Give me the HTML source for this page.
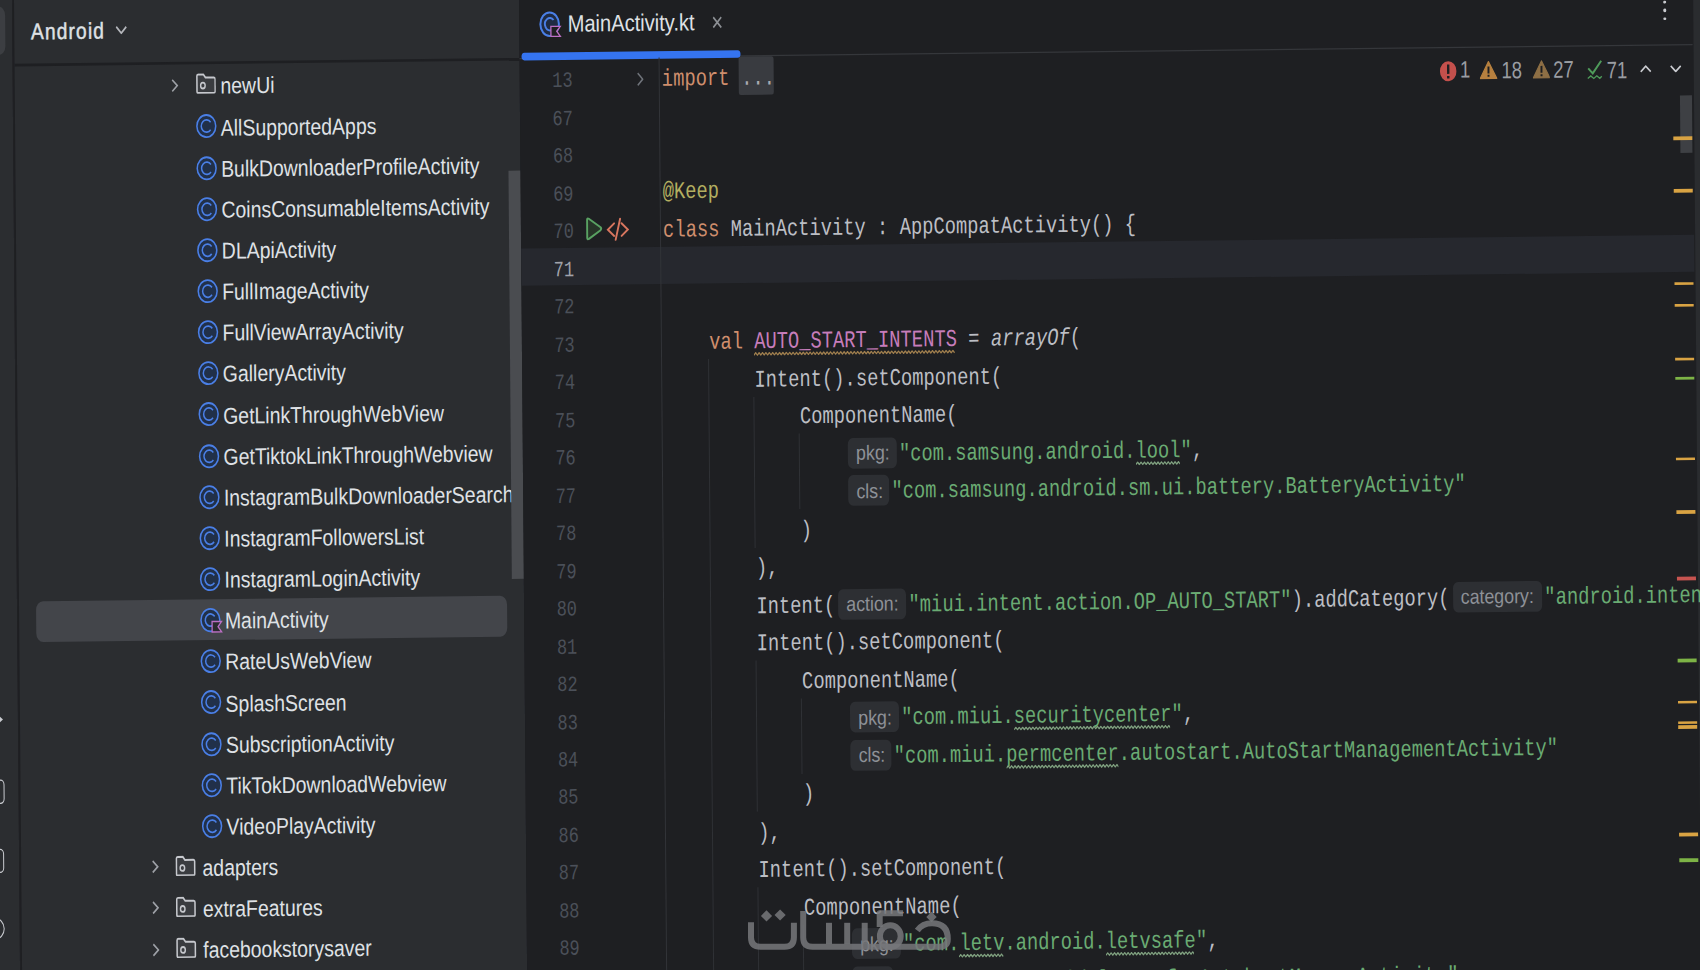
<!DOCTYPE html>
<html><head><meta charset="utf-8"><title>MainActivity.kt</title>
<style>
html,body{margin:0;padding:0;width:1700px;height:970px;overflow:hidden;background:#1E1F22}
#w{position:absolute;left:0;top:0;width:1760px;height:820px;transform-origin:0 0;transform:matrix(1,-0.0118,0.010624,1.28,0,0)}
.a{position:absolute;white-space:pre;line-height:1;margin:0}
.s{font-family:"Liberation Sans",sans-serif}
.m{font-family:"Liberation Mono",monospace}
</style></head><body><div id="w">
<div class="a" style="left:-60.00px;top:-40.00px;width:72.30px;height:900.00px;background:#2B2D30;"></div>
<div class="a" style="left:12.40px;top:-40.00px;width:1.00px;height:900.00px;background:#202124;"></div>
<div class="a" style="left:-30.00px;top:5.10px;width:34.50px;height:38.10px;background:#3C3E42;border-radius:7px;"></div>
<svg class="a" style="left:-11.98px;top:557.44px;" width="10.00" height="10.00" viewBox="0 0 10 10" preserveAspectRatio="none"><path d="M2 1 L7.5 5 L2 9" stroke="#C9CBD0" stroke-width="1.8" fill="none"/></svg>
<div class="a" style="left:-20.58px;top:609.47px;width:18.50px;height:19px;border:1.8px solid #C9CBD0;border-radius:4px;box-sizing:border-box"></div>
<div class="a" style="left:-21.15px;top:663.37px;width:18.50px;height:19px;border:1.8px solid #C9CBD0;border-radius:4px;box-sizing:border-box"></div>
<div class="a" style="left:-21.72px;top:717.49px;width:19.00px;height:17px;border:1.8px solid #C9CBD0;border-radius:50%;box-sizing:border-box"></div>
<div class="a" style="left:13.50px;top:-40.00px;width:505.70px;height:900.00px;background:#2B2D30;"></div>
<div class="a" style="left:13.50px;top:50.30px;width:505.70px;height:1.90px;background:#1E1F22;"></div>
<div class="a s" style="left:30.67px;top:15.24px;font-size:19.2px;color:#DFE1E5;letter-spacing:1.15px;-webkit-text-stroke:0.4px #DFE1E5;transform:scaleY(0.92);transform-origin:0 16.25px;">Android</div>
<svg class="a" style="left:115.00px;top:21.17px;" width="12.00" height="7.00" viewBox="0 0 12 7" preserveAspectRatio="none"><path d="M1 1 L6 6 L11 1" stroke="#B4B6BB" stroke-width="1.6" fill="none"/></svg>
<svg class="a" style="left:170.35px;top:62.51px;" width="8.00" height="11.00" viewBox="0 0 8 11" preserveAspectRatio="none"><path d="M1.5 1 L6.5 5.5 L1.5 10" stroke="#9DA0A6" stroke-width="1.5" fill="none"/></svg>
<svg class="a" style="left:194.85px;top:58.71px;" width="20.50" height="16.60" viewBox="0 0 20 16" preserveAspectRatio="none"><path d="M1.2 2.2 Q1.2 1 2.4 1 L7.5 1 L9.5 3.3 L17.8 3.3 Q19 3.3 19 4.5 L19 13.8 Q19 15 17.8 15 L2.4 15 Q1.2 15 1.2 13.8 Z" fill="#3A3C40" stroke="#C6C8CD" stroke-width="1.5"/><ellipse cx="7" cy="9.4" rx="2.2" ry="2.2" fill="none" stroke="#C6C8CD" stroke-width="1.4"/></svg>
<div class="a s" style="left:219.68px;top:59.35px;font-size:19.45px;color:#DFE1E5;transform:scaleY(0.92);transform-origin:0 16.46px;">newUi</div>
<svg class="a" style="left:194.85px;top:91.36px;overflow:visible;" width="20.50" height="18.75" viewBox="0 0 20 20" preserveAspectRatio="none"><ellipse cx="10" cy="10" rx="9.2" ry="9.2" fill="#213049" stroke="#4A7FE6" stroke-width="1.5"/><path d="M14.2 6.9 A5.1 5.1 0 1 0 14.2 13.1" fill="none" stroke="#4A7FE6" stroke-width="1.45"/></svg>
<div class="a s" style="left:219.68px;top:91.50px;font-size:19.45px;color:#DFE1E5;transform:scaleY(0.92);transform-origin:0 16.46px;">AllSupportedApps</div>
<svg class="a" style="left:194.85px;top:123.51px;overflow:visible;" width="20.50" height="18.75" viewBox="0 0 20 20" preserveAspectRatio="none"><ellipse cx="10" cy="10" rx="9.2" ry="9.2" fill="#213049" stroke="#4A7FE6" stroke-width="1.5"/><path d="M14.2 6.9 A5.1 5.1 0 1 0 14.2 13.1" fill="none" stroke="#4A7FE6" stroke-width="1.45"/></svg>
<div class="a s" style="left:219.68px;top:123.65px;font-size:19.45px;color:#DFE1E5;transform:scaleY(0.92);transform-origin:0 16.46px;">BulkDownloaderProfileActivity</div>
<svg class="a" style="left:194.85px;top:155.66px;overflow:visible;" width="20.50" height="18.75" viewBox="0 0 20 20" preserveAspectRatio="none"><ellipse cx="10" cy="10" rx="9.2" ry="9.2" fill="#213049" stroke="#4A7FE6" stroke-width="1.5"/><path d="M14.2 6.9 A5.1 5.1 0 1 0 14.2 13.1" fill="none" stroke="#4A7FE6" stroke-width="1.45"/></svg>
<div class="a s" style="left:219.68px;top:155.79px;font-size:19.45px;color:#DFE1E5;transform:scaleY(0.92);transform-origin:0 16.46px;">CoinsConsumableItemsActivity</div>
<svg class="a" style="left:194.85px;top:187.81px;overflow:visible;" width="20.50" height="18.75" viewBox="0 0 20 20" preserveAspectRatio="none"><ellipse cx="10" cy="10" rx="9.2" ry="9.2" fill="#213049" stroke="#4A7FE6" stroke-width="1.5"/><path d="M14.2 6.9 A5.1 5.1 0 1 0 14.2 13.1" fill="none" stroke="#4A7FE6" stroke-width="1.45"/></svg>
<div class="a s" style="left:219.68px;top:187.94px;font-size:19.45px;color:#DFE1E5;transform:scaleY(0.92);transform-origin:0 16.46px;">DLApiActivity</div>
<svg class="a" style="left:194.85px;top:219.96px;overflow:visible;" width="20.50" height="18.75" viewBox="0 0 20 20" preserveAspectRatio="none"><ellipse cx="10" cy="10" rx="9.2" ry="9.2" fill="#213049" stroke="#4A7FE6" stroke-width="1.5"/><path d="M14.2 6.9 A5.1 5.1 0 1 0 14.2 13.1" fill="none" stroke="#4A7FE6" stroke-width="1.45"/></svg>
<div class="a s" style="left:219.68px;top:220.09px;font-size:19.45px;color:#DFE1E5;transform:scaleY(0.92);transform-origin:0 16.46px;">FullImageActivity</div>
<svg class="a" style="left:194.85px;top:252.10px;overflow:visible;" width="20.50" height="18.75" viewBox="0 0 20 20" preserveAspectRatio="none"><ellipse cx="10" cy="10" rx="9.2" ry="9.2" fill="#213049" stroke="#4A7FE6" stroke-width="1.5"/><path d="M14.2 6.9 A5.1 5.1 0 1 0 14.2 13.1" fill="none" stroke="#4A7FE6" stroke-width="1.45"/></svg>
<div class="a s" style="left:219.68px;top:252.24px;font-size:19.45px;color:#DFE1E5;transform:scaleY(0.92);transform-origin:0 16.46px;">FullViewArrayActivity</div>
<svg class="a" style="left:194.85px;top:284.25px;overflow:visible;" width="20.50" height="18.75" viewBox="0 0 20 20" preserveAspectRatio="none"><ellipse cx="10" cy="10" rx="9.2" ry="9.2" fill="#213049" stroke="#4A7FE6" stroke-width="1.5"/><path d="M14.2 6.9 A5.1 5.1 0 1 0 14.2 13.1" fill="none" stroke="#4A7FE6" stroke-width="1.45"/></svg>
<div class="a s" style="left:219.68px;top:284.39px;font-size:19.45px;color:#DFE1E5;transform:scaleY(0.92);transform-origin:0 16.46px;">GalleryActivity</div>
<svg class="a" style="left:194.85px;top:316.40px;overflow:visible;" width="20.50" height="18.75" viewBox="0 0 20 20" preserveAspectRatio="none"><ellipse cx="10" cy="10" rx="9.2" ry="9.2" fill="#213049" stroke="#4A7FE6" stroke-width="1.5"/><path d="M14.2 6.9 A5.1 5.1 0 1 0 14.2 13.1" fill="none" stroke="#4A7FE6" stroke-width="1.45"/></svg>
<div class="a s" style="left:219.68px;top:316.54px;font-size:19.45px;color:#DFE1E5;transform:scaleY(0.92);transform-origin:0 16.46px;">GetLinkThroughWebView</div>
<svg class="a" style="left:194.85px;top:348.55px;overflow:visible;" width="20.50" height="18.75" viewBox="0 0 20 20" preserveAspectRatio="none"><ellipse cx="10" cy="10" rx="9.2" ry="9.2" fill="#213049" stroke="#4A7FE6" stroke-width="1.5"/><path d="M14.2 6.9 A5.1 5.1 0 1 0 14.2 13.1" fill="none" stroke="#4A7FE6" stroke-width="1.45"/></svg>
<div class="a s" style="left:219.68px;top:348.68px;font-size:19.45px;color:#DFE1E5;transform:scaleY(0.92);transform-origin:0 16.46px;">GetTiktokLinkThroughWebview</div>
<svg class="a" style="left:194.85px;top:380.70px;overflow:visible;" width="20.50" height="18.75" viewBox="0 0 20 20" preserveAspectRatio="none"><ellipse cx="10" cy="10" rx="9.2" ry="9.2" fill="#213049" stroke="#4A7FE6" stroke-width="1.5"/><path d="M14.2 6.9 A5.1 5.1 0 1 0 14.2 13.1" fill="none" stroke="#4A7FE6" stroke-width="1.45"/></svg>
<div class="a s" style="left:219.68px;top:380.83px;font-size:19.45px;color:#DFE1E5;transform:scaleY(0.92);transform-origin:0 16.46px;">InstagramBulkDownloaderSearch</div>
<svg class="a" style="left:194.85px;top:412.85px;overflow:visible;" width="20.50" height="18.75" viewBox="0 0 20 20" preserveAspectRatio="none"><ellipse cx="10" cy="10" rx="9.2" ry="9.2" fill="#213049" stroke="#4A7FE6" stroke-width="1.5"/><path d="M14.2 6.9 A5.1 5.1 0 1 0 14.2 13.1" fill="none" stroke="#4A7FE6" stroke-width="1.45"/></svg>
<div class="a s" style="left:219.68px;top:412.98px;font-size:19.45px;color:#DFE1E5;transform:scaleY(0.92);transform-origin:0 16.46px;">InstagramFollowersList</div>
<svg class="a" style="left:194.85px;top:444.99px;overflow:visible;" width="20.50" height="18.75" viewBox="0 0 20 20" preserveAspectRatio="none"><ellipse cx="10" cy="10" rx="9.2" ry="9.2" fill="#213049" stroke="#4A7FE6" stroke-width="1.5"/><path d="M14.2 6.9 A5.1 5.1 0 1 0 14.2 13.1" fill="none" stroke="#4A7FE6" stroke-width="1.45"/></svg>
<div class="a s" style="left:219.68px;top:445.13px;font-size:19.45px;color:#DFE1E5;transform:scaleY(0.92);transform-origin:0 16.46px;">InstagramLoginActivity</div>
<div class="a" style="left:30.60px;top:469.84px;width:471.70px;height:32.60px;background:#43454A;border-radius:7px;"></div>
<svg class="a" style="left:194.85px;top:477.14px;overflow:visible;" width="20.50" height="18.75" viewBox="0 0 20 20" preserveAspectRatio="none"><ellipse cx="10" cy="10" rx="9.2" ry="9.4" fill="#213049" stroke="#4A7FE6" stroke-width="1.5"/><path d="M14.2 6.9 A5.1 5.1 0 1 0 12.2 14.6" fill="none" stroke="#4A7FE6" stroke-width="1.45"/><path d="M11.6 11.2 L20.8 11.2 L17.4 15.5 L20.8 19.8 L11.6 19.8 Z" fill="#2A2B2F" stroke="#BC6FC4" stroke-width="1.25" stroke-linejoin="miter"/></svg>
<div class="a s" style="left:219.68px;top:477.28px;font-size:19.45px;color:#DFE1E5;transform:scaleY(0.92);transform-origin:0 16.46px;">MainActivity</div>
<svg class="a" style="left:194.85px;top:509.29px;overflow:visible;" width="20.50" height="18.75" viewBox="0 0 20 20" preserveAspectRatio="none"><ellipse cx="10" cy="10" rx="9.2" ry="9.2" fill="#213049" stroke="#4A7FE6" stroke-width="1.5"/><path d="M14.2 6.9 A5.1 5.1 0 1 0 14.2 13.1" fill="none" stroke="#4A7FE6" stroke-width="1.45"/></svg>
<div class="a s" style="left:219.68px;top:509.43px;font-size:19.45px;color:#DFE1E5;transform:scaleY(0.92);transform-origin:0 16.46px;">RateUsWebView</div>
<svg class="a" style="left:194.85px;top:541.44px;overflow:visible;" width="20.50" height="18.75" viewBox="0 0 20 20" preserveAspectRatio="none"><ellipse cx="10" cy="10" rx="9.2" ry="9.2" fill="#213049" stroke="#4A7FE6" stroke-width="1.5"/><path d="M14.2 6.9 A5.1 5.1 0 1 0 14.2 13.1" fill="none" stroke="#4A7FE6" stroke-width="1.45"/></svg>
<div class="a s" style="left:219.68px;top:541.58px;font-size:19.45px;color:#DFE1E5;transform:scaleY(0.92);transform-origin:0 16.46px;">SplashScreen</div>
<svg class="a" style="left:194.85px;top:573.59px;overflow:visible;" width="20.50" height="18.75" viewBox="0 0 20 20" preserveAspectRatio="none"><ellipse cx="10" cy="10" rx="9.2" ry="9.2" fill="#213049" stroke="#4A7FE6" stroke-width="1.5"/><path d="M14.2 6.9 A5.1 5.1 0 1 0 14.2 13.1" fill="none" stroke="#4A7FE6" stroke-width="1.45"/></svg>
<div class="a s" style="left:219.68px;top:573.72px;font-size:19.45px;color:#DFE1E5;transform:scaleY(0.92);transform-origin:0 16.46px;">SubscriptionActivity</div>
<svg class="a" style="left:194.85px;top:605.74px;overflow:visible;" width="20.50" height="18.75" viewBox="0 0 20 20" preserveAspectRatio="none"><ellipse cx="10" cy="10" rx="9.2" ry="9.2" fill="#213049" stroke="#4A7FE6" stroke-width="1.5"/><path d="M14.2 6.9 A5.1 5.1 0 1 0 14.2 13.1" fill="none" stroke="#4A7FE6" stroke-width="1.45"/></svg>
<div class="a s" style="left:219.68px;top:605.87px;font-size:19.45px;color:#DFE1E5;transform:scaleY(0.92);transform-origin:0 16.46px;">TikTokDownloadWebview</div>
<svg class="a" style="left:194.85px;top:637.88px;overflow:visible;" width="20.50" height="18.75" viewBox="0 0 20 20" preserveAspectRatio="none"><ellipse cx="10" cy="10" rx="9.2" ry="9.2" fill="#213049" stroke="#4A7FE6" stroke-width="1.5"/><path d="M14.2 6.9 A5.1 5.1 0 1 0 14.2 13.1" fill="none" stroke="#4A7FE6" stroke-width="1.45"/></svg>
<div class="a s" style="left:219.68px;top:638.02px;font-size:19.45px;color:#DFE1E5;transform:scaleY(0.92);transform-origin:0 16.46px;">VideoPlayActivity</div>
<svg class="a" style="left:143.75px;top:673.33px;" width="8.00" height="11.00" viewBox="0 0 8 11" preserveAspectRatio="none"><path d="M1.5 1 L6.5 5.5 L1.5 10" stroke="#9DA0A6" stroke-width="1.5" fill="none"/></svg>
<svg class="a" style="left:168.25px;top:669.53px;" width="20.50" height="16.60" viewBox="0 0 20 16" preserveAspectRatio="none"><path d="M1.2 2.2 Q1.2 1 2.4 1 L7.5 1 L9.5 3.3 L17.8 3.3 Q19 3.3 19 4.5 L19 13.8 Q19 15 17.8 15 L2.4 15 Q1.2 15 1.2 13.8 Z" fill="#3A3C40" stroke="#C6C8CD" stroke-width="1.5"/><ellipse cx="7" cy="9.4" rx="2.2" ry="2.2" fill="none" stroke="#C6C8CD" stroke-width="1.4"/></svg>
<div class="a s" style="left:195.28px;top:670.17px;font-size:19.45px;color:#DFE1E5;transform:scaleY(0.92);transform-origin:0 16.46px;">adapters</div>
<svg class="a" style="left:143.75px;top:705.48px;" width="8.00" height="11.00" viewBox="0 0 8 11" preserveAspectRatio="none"><path d="M1.5 1 L6.5 5.5 L1.5 10" stroke="#9DA0A6" stroke-width="1.5" fill="none"/></svg>
<svg class="a" style="left:168.25px;top:701.68px;" width="20.50" height="16.60" viewBox="0 0 20 16" preserveAspectRatio="none"><path d="M1.2 2.2 Q1.2 1 2.4 1 L7.5 1 L9.5 3.3 L17.8 3.3 Q19 3.3 19 4.5 L19 13.8 Q19 15 17.8 15 L2.4 15 Q1.2 15 1.2 13.8 Z" fill="#3A3C40" stroke="#C6C8CD" stroke-width="1.5"/><ellipse cx="7" cy="9.4" rx="2.2" ry="2.2" fill="none" stroke="#C6C8CD" stroke-width="1.4"/></svg>
<div class="a s" style="left:195.28px;top:702.32px;font-size:19.45px;color:#DFE1E5;transform:scaleY(0.92);transform-origin:0 16.46px;">extraFeatures</div>
<svg class="a" style="left:143.75px;top:737.63px;" width="8.00" height="11.00" viewBox="0 0 8 11" preserveAspectRatio="none"><path d="M1.5 1 L6.5 5.5 L1.5 10" stroke="#9DA0A6" stroke-width="1.5" fill="none"/></svg>
<svg class="a" style="left:168.25px;top:733.83px;" width="20.50" height="16.60" viewBox="0 0 20 16" preserveAspectRatio="none"><path d="M1.2 2.2 Q1.2 1 2.4 1 L7.5 1 L9.5 3.3 L17.8 3.3 Q19 3.3 19 4.5 L19 13.8 Q19 15 17.8 15 L2.4 15 Q1.2 15 1.2 13.8 Z" fill="#3A3C40" stroke="#C6C8CD" stroke-width="1.5"/><ellipse cx="7" cy="9.4" rx="2.2" ry="2.2" fill="none" stroke="#C6C8CD" stroke-width="1.4"/></svg>
<div class="a s" style="left:195.28px;top:734.47px;font-size:19.45px;color:#DFE1E5;transform:scaleY(0.92);transform-origin:0 16.46px;">facebookstorysaver</div>
<div class="a" style="left:506.50px;top:137.80px;width:12.20px;height:319.30px;background:#4A4C50;"></div>
<div class="a" style="left:519.20px;top:-40.00px;width:1260.00px;height:900.00px;background:#1E1F22;"></div>
<div class="a" style="left:1692.50px;top:-40.00px;width:80.00px;height:900.00px;background:#2A2C2F;"></div>
<svg class="a" style="left:538.75px;top:14.03px;overflow:visible;" width="21.50" height="20.16" viewBox="0 0 21.5 25.8" preserveAspectRatio="none"><ellipse cx="10.4" cy="12.8" rx="9.3" ry="11.8" fill="#1F2B43" stroke="#4A7FE6" stroke-width="2"/><path d="M14.3 8.6 A4.9 6.3 0 1 0 12.6 18.6" fill="none" stroke="#4A7FE6" stroke-width="1.9"/><path d="M11.6 15 L21 15 L17.4 19.9 L21 25 L11.6 25 Z" fill="#1E1F22" stroke="#BC6FC4" stroke-width="1.3"/></svg>
<div class="a s" style="left:567.38px;top:13.27px;font-size:20.1px;color:#DFE1E5;transform:scaleY(0.92);transform-origin:0 17.01px;">MainActivity.kt</div>
<svg class="a" style="left:712.39px;top:19.12px;" width="10.00" height="10.10" viewBox="0 0 10 10" preserveAspectRatio="none"><path d="M1 1 L9 9 M9 1 L1 9" stroke="#8C8F94" stroke-width="1.5"/></svg>
<div class="a" style="left:519.20px;top:50.40px;width:1173.30px;height:1.00px;background:#35373B;"></div>
<div class="a" style="left:520.68px;top:46.35px;width:219.10px;height:5.50px;background:#3574F0;border-radius:3px;"></div>
<div class="a" style="left:519.20px;top:198.93px;width:1173.30px;height:29.48px;background:#26282E;"></div>
<div class="a" style="left:658.20px;top:51.40px;width:1.20px;height:850.00px;background:#323438;"></div>
<div class="a m" style="left:551.50px;top:60.28px;font-size:17px;color:#4B5059;letter-spacing:-0.1px;">13</div>
<div class="a m" style="left:551.50px;top:89.76px;font-size:17px;color:#4B5059;letter-spacing:-0.1px;">67</div>
<div class="a m" style="left:551.50px;top:119.25px;font-size:17px;color:#4B5059;letter-spacing:-0.1px;">68</div>
<div class="a m" style="left:551.50px;top:148.73px;font-size:17px;color:#4B5059;letter-spacing:-0.1px;">69</div>
<div class="a m" style="left:551.50px;top:178.22px;font-size:17px;color:#4B5059;letter-spacing:-0.1px;">70</div>
<div class="a m" style="left:551.50px;top:207.70px;font-size:17px;color:#A1A3AB;letter-spacing:-0.1px;">71</div>
<div class="a m" style="left:551.50px;top:237.19px;font-size:17px;color:#4B5059;letter-spacing:-0.1px;">72</div>
<div class="a m" style="left:551.50px;top:266.67px;font-size:17px;color:#4B5059;letter-spacing:-0.1px;">73</div>
<div class="a m" style="left:551.50px;top:296.16px;font-size:17px;color:#4B5059;letter-spacing:-0.1px;">74</div>
<div class="a m" style="left:551.50px;top:325.64px;font-size:17px;color:#4B5059;letter-spacing:-0.1px;">75</div>
<div class="a m" style="left:551.50px;top:355.13px;font-size:17px;color:#4B5059;letter-spacing:-0.1px;">76</div>
<div class="a m" style="left:551.50px;top:384.61px;font-size:17px;color:#4B5059;letter-spacing:-0.1px;">77</div>
<div class="a m" style="left:551.50px;top:414.10px;font-size:17px;color:#4B5059;letter-spacing:-0.1px;">78</div>
<div class="a m" style="left:551.50px;top:443.58px;font-size:17px;color:#4B5059;letter-spacing:-0.1px;">79</div>
<div class="a m" style="left:551.50px;top:473.07px;font-size:17px;color:#4B5059;letter-spacing:-0.1px;">80</div>
<div class="a m" style="left:551.50px;top:502.55px;font-size:17px;color:#4B5059;letter-spacing:-0.1px;">81</div>
<div class="a m" style="left:551.50px;top:532.04px;font-size:17px;color:#4B5059;letter-spacing:-0.1px;">82</div>
<div class="a m" style="left:551.50px;top:561.52px;font-size:17px;color:#4B5059;letter-spacing:-0.1px;">83</div>
<div class="a m" style="left:551.50px;top:591.01px;font-size:17px;color:#4B5059;letter-spacing:-0.1px;">84</div>
<div class="a m" style="left:551.50px;top:620.49px;font-size:17px;color:#4B5059;letter-spacing:-0.1px;">85</div>
<div class="a m" style="left:551.50px;top:649.98px;font-size:17px;color:#4B5059;letter-spacing:-0.1px;">86</div>
<div class="a m" style="left:551.50px;top:679.46px;font-size:17px;color:#4B5059;letter-spacing:-0.1px;">87</div>
<div class="a m" style="left:551.50px;top:708.95px;font-size:17px;color:#4B5059;letter-spacing:-0.1px;">88</div>
<div class="a m" style="left:551.50px;top:738.43px;font-size:17px;color:#4B5059;letter-spacing:-0.1px;">89</div>
<div class="a m" style="left:551.50px;top:767.92px;font-size:17px;color:#4B5059;letter-spacing:-0.1px;">90</div>
<svg class="a" style="left:636.12px;top:61.55px;" width="7.00" height="11.50" viewBox="0 0 7 12" preserveAspectRatio="none"><path d="M1 1 L6 6 L1 11" stroke="#6F737A" stroke-width="1.4" fill="none"/></svg>
<svg class="a" style="left:582.84px;top:175.22px;overflow:visible;" width="17.30" height="18.36" viewBox="0 0 17.3 23.5" preserveAspectRatio="none"><path d="M2.2 2.6 Q2.2 0.8 3.9 1.7 L15.6 10.3 Q16.9 11.75 15.6 13.2 L3.9 21.8 Q2.2 22.7 2.2 20.9 Z" fill="#273428" stroke="#59A162" stroke-width="1.9" stroke-linejoin="round"/></svg>
<svg class="a" style="left:605.33px;top:175.89px;overflow:visible;" width="22.00" height="17.58" viewBox="0 0 22 22.5" preserveAspectRatio="none"><path d="M7.2 5.3 L0.9 11.6 L7.2 17.9 M14.6 5.3 L20.9 11.6 L14.6 17.9 M13.2 0.8 L8.6 21.8" fill="none" stroke="#D8765F" stroke-width="1.9" stroke-linecap="round"/></svg>
<div class="a m" style="left:661.10px;top:58.91px;font-size:18.78px;color:#CF8E6D;">import</div>
<div class="a" style="left:738.49px;top:50.80px;width:35.00px;height:30.50px;background:#393B40;border-radius:2px;"></div>
<div class="a m" style="left:740.49px;top:58.91px;font-size:18.78px;color:#A9ABB0;">...</div>
<div class="a m" style="left:661.10px;top:147.37px;font-size:18.78px;color:#B3AE60;">@Keep</div>
<div class="a m" style="left:661.10px;top:176.85px;font-size:18.78px;color:#CF8E6D;">class</div>
<div class="a m" style="left:717.45px;top:176.85px;font-size:18.78px;color:#BCBEC4;"> MainActivity : AppCompatActivity() {</div>
<div class="a m" style="left:706.18px;top:265.31px;font-size:18.78px;color:#CF8E6D;">val</div>
<div class="a m" style="left:739.99px;top:265.31px;font-size:18.78px;color:#BCBEC4;"> </div>
<div class="a m" style="left:751.26px;top:265.31px;font-size:18.78px;color:#C77DBB;">AUTO_START_INTENTS</div>
<div class="a m" style="left:954.12px;top:265.31px;font-size:18.78px;color:#BCBEC4;"> = </div>
<div class="a m" style="left:987.93px;top:265.31px;font-size:18.78px;color:#BCBEC4;font-style:italic;">arrayOf</div>
<div class="a m" style="left:1066.82px;top:265.31px;font-size:18.78px;color:#BCBEC4;">(</div>
<svg class="a" style="left:751.26px;top:282.30px;" width="200.60" height="2.90" viewBox="0 0 200.6 2.9" preserveAspectRatio="none"><path d="M0 2.4 L1.7 0.5 L3.4 2.4 L5.1 0.5 L6.8 2.4 L8.5 0.5 L10.2 2.4 L11.9 0.5 L13.6 2.4 L15.3 0.5 L17.0 2.4 L18.7 0.5 L20.4 2.4 L22.1 0.5 L23.8 2.4 L25.5 0.5 L27.2 2.4 L28.9 0.5 L30.6 2.4 L32.3 0.5 L34.0 2.4 L35.7 0.5 L37.4 2.4 L39.1 0.5 L40.8 2.4 L42.5 0.5 L44.2 2.4 L45.9 0.5 L47.6 2.4 L49.3 0.5 L51.0 2.4 L52.7 0.5 L54.4 2.4 L56.1 0.5 L57.8 2.4 L59.5 0.5 L61.2 2.4 L62.9 0.5 L64.6 2.4 L66.3 0.5 L68.0 2.4 L69.7 0.5 L71.4 2.4 L73.1 0.5 L74.8 2.4 L76.5 0.5 L78.2 2.4 L79.9 0.5 L81.6 2.4 L83.3 0.5 L85.0 2.4 L86.7 0.5 L88.4 2.4 L90.1 0.5 L91.8 2.4 L93.5 0.5 L95.2 2.4 L96.9 0.5 L98.6 2.4 L100.3 0.5 L102.0 2.4 L103.7 0.5 L105.4 2.4 L107.1 0.5 L108.8 2.4 L110.5 0.5 L112.2 2.4 L113.9 0.5 L115.6 2.4 L117.3 0.5 L119.0 2.4 L120.7 0.5 L122.4 2.4 L124.1 0.5 L125.8 2.4 L127.5 0.5 L129.2 2.4 L130.9 0.5 L132.6 2.4 L134.3 0.5 L136.0 2.4 L137.7 0.5 L139.4 2.4 L141.1 0.5 L142.8 2.4 L144.5 0.5 L146.2 2.4 L147.9 0.5 L149.6 2.4 L151.3 0.5 L153.0 2.4 L154.7 0.5 L156.4 2.4 L158.1 0.5 L159.8 2.4 L161.5 0.5 L163.2 2.4 L164.9 0.5 L166.6 2.4 L168.3 0.5 L170.0 2.4 L171.7 0.5 L173.4 2.4 L175.1 0.5 L176.8 2.4 L178.5 0.5 L180.2 2.4 L181.9 0.5 L183.6 2.4 L185.3 0.5 L187.0 2.4 L188.7 0.5 L190.4 2.4 L192.1 0.5 L193.8 2.4 L195.5 0.5 L197.2 2.4 L198.9 0.5 L200.6 2.4" fill="none" stroke="#A07F4E" stroke-width="1.15"/></svg>
<div class="a m" style="left:751.26px;top:294.79px;font-size:18.78px;color:#BCBEC4;">Intent().setComponent(</div>
<div class="a m" style="left:796.34px;top:324.28px;font-size:18.78px;color:#BCBEC4;">ComponentName(</div>
<div class="a" style="left:844.42px;top:349.75px;width:48.80px;height:23.90px;background:#2D2F33;border-radius:5px;"></div>
<div class="a s" style="left:852.22px;top:353.28px;font-size:17.8px;color:#8E9197;transform:scaleY(0.9);transform-origin:0 15.07px;">pkg:</div>
<div class="a m" style="left:895.12px;top:353.76px;font-size:18.78px;color:#6AAB73;">"com.samsung.android.lool"</div>
<div class="a m" style="left:1188.14px;top:353.76px;font-size:18.78px;color:#BCBEC4;">,</div>
<svg class="a" style="left:1131.79px;top:370.75px;" width="44.20" height="2.90" viewBox="0 0 44.2 2.9" preserveAspectRatio="none"><path d="M0 2.4 L1.7 0.5 L3.4 2.4 L5.1 0.5 L6.8 2.4 L8.5 0.5 L10.2 2.4 L11.9 0.5 L13.6 2.4 L15.3 0.5 L17.0 2.4 L18.7 0.5 L20.4 2.4 L22.1 0.5 L23.8 2.4 L25.5 0.5 L27.2 2.4 L28.9 0.5 L30.6 2.4 L32.3 0.5 L34.0 2.4 L35.7 0.5 L37.4 2.4 L39.1 0.5 L40.8 2.4 L42.5 0.5 L44.2 2.4" fill="none" stroke="#7FA07F" stroke-width="1.15"/></svg>
<div class="a" style="left:844.42px;top:379.24px;width:40.60px;height:23.90px;background:#2D2F33;border-radius:5px;"></div>
<div class="a s" style="left:852.22px;top:382.77px;font-size:17.8px;color:#8E9197;transform:scaleY(0.9);transform-origin:0 15.07px;">cls:</div>
<div class="a m" style="left:887.22px;top:383.25px;font-size:18.78px;color:#6AAB73;">"com.samsung.android.sm.ui.battery.BatteryActivity"</div>
<div class="a m" style="left:796.34px;top:412.73px;font-size:18.78px;color:#BCBEC4;">)</div>
<div class="a m" style="left:751.26px;top:442.22px;font-size:18.78px;color:#BCBEC4;">),</div>
<div class="a m" style="left:751.26px;top:471.70px;font-size:18.78px;color:#BCBEC4;">Intent(</div>
<div class="a" style="left:833.35px;top:467.69px;width:67.90px;height:23.90px;background:#2D2F33;border-radius:5px;"></div>
<div class="a s" style="left:841.15px;top:471.22px;font-size:17.8px;color:#8E9197;transform:scaleY(0.9);transform-origin:0 15.07px;">action:</div>
<div class="a m" style="left:903.45px;top:471.70px;font-size:18.78px;color:#6AAB73;">"miui.intent.action.OP_AUTO_START"</div>
<div class="a m" style="left:1286.63px;top:471.70px;font-size:18.78px;color:#BCBEC4;">).addCategory(</div>
<div class="a" style="left:1447.81px;top:467.69px;width:88.80px;height:23.90px;background:#2D2F33;border-radius:5px;"></div>
<div class="a s" style="left:1455.61px;top:471.22px;font-size:17.8px;color:#8E9197;transform:scaleY(0.9);transform-origin:0 15.07px;">category:</div>
<div class="a m" style="left:1539.21px;top:471.70px;font-size:18.78px;color:#6AAB73;">"android.intent.category.DEFAULT"</div>
<div class="a m" style="left:751.26px;top:501.19px;font-size:18.78px;color:#BCBEC4;">Intent().setComponent(</div>
<div class="a m" style="left:796.34px;top:530.67px;font-size:18.78px;color:#BCBEC4;">ComponentName(</div>
<div class="a" style="left:844.42px;top:556.14px;width:48.80px;height:23.90px;background:#2D2F33;border-radius:5px;"></div>
<div class="a s" style="left:852.22px;top:559.68px;font-size:17.8px;color:#8E9197;transform:scaleY(0.9);transform-origin:0 15.07px;">pkg:</div>
<div class="a m" style="left:895.12px;top:560.16px;font-size:18.78px;color:#6AAB73;">"com.miui.securitycenter"</div>
<div class="a m" style="left:1176.87px;top:560.16px;font-size:18.78px;color:#BCBEC4;">,</div>
<svg class="a" style="left:1007.82px;top:577.14px;" width="156.40" height="2.90" viewBox="0 0 156.4 2.9" preserveAspectRatio="none"><path d="M0 2.4 L1.7 0.5 L3.4 2.4 L5.1 0.5 L6.8 2.4 L8.5 0.5 L10.2 2.4 L11.9 0.5 L13.6 2.4 L15.3 0.5 L17.0 2.4 L18.7 0.5 L20.4 2.4 L22.1 0.5 L23.8 2.4 L25.5 0.5 L27.2 2.4 L28.9 0.5 L30.6 2.4 L32.3 0.5 L34.0 2.4 L35.7 0.5 L37.4 2.4 L39.1 0.5 L40.8 2.4 L42.5 0.5 L44.2 2.4 L45.9 0.5 L47.6 2.4 L49.3 0.5 L51.0 2.4 L52.7 0.5 L54.4 2.4 L56.1 0.5 L57.8 2.4 L59.5 0.5 L61.2 2.4 L62.9 0.5 L64.6 2.4 L66.3 0.5 L68.0 2.4 L69.7 0.5 L71.4 2.4 L73.1 0.5 L74.8 2.4 L76.5 0.5 L78.2 2.4 L79.9 0.5 L81.6 2.4 L83.3 0.5 L85.0 2.4 L86.7 0.5 L88.4 2.4 L90.1 0.5 L91.8 2.4 L93.5 0.5 L95.2 2.4 L96.9 0.5 L98.6 2.4 L100.3 0.5 L102.0 2.4 L103.7 0.5 L105.4 2.4 L107.1 0.5 L108.8 2.4 L110.5 0.5 L112.2 2.4 L113.9 0.5 L115.6 2.4 L117.3 0.5 L119.0 2.4 L120.7 0.5 L122.4 2.4 L124.1 0.5 L125.8 2.4 L127.5 0.5 L129.2 2.4 L130.9 0.5 L132.6 2.4 L134.3 0.5 L136.0 2.4 L137.7 0.5 L139.4 2.4 L141.1 0.5 L142.8 2.4 L144.5 0.5 L146.2 2.4 L147.9 0.5 L149.6 2.4 L151.3 0.5 L153.0 2.4 L154.7 0.5 L156.4 2.4" fill="none" stroke="#7FA07F" stroke-width="1.15"/></svg>
<div class="a" style="left:844.42px;top:585.63px;width:40.60px;height:23.90px;background:#2D2F33;border-radius:5px;"></div>
<div class="a s" style="left:852.22px;top:589.16px;font-size:17.8px;color:#8E9197;transform:scaleY(0.9);transform-origin:0 15.07px;">cls:</div>
<div class="a m" style="left:887.22px;top:589.64px;font-size:18.78px;color:#6AAB73;">"com.miui.permcenter.autostart.AutoStartManagementActivity"</div>
<svg class="a" style="left:999.92px;top:606.63px;" width="112.20" height="2.90" viewBox="0 0 112.2 2.9" preserveAspectRatio="none"><path d="M0 2.4 L1.7 0.5 L3.4 2.4 L5.1 0.5 L6.8 2.4 L8.5 0.5 L10.2 2.4 L11.9 0.5 L13.6 2.4 L15.3 0.5 L17.0 2.4 L18.7 0.5 L20.4 2.4 L22.1 0.5 L23.8 2.4 L25.5 0.5 L27.2 2.4 L28.9 0.5 L30.6 2.4 L32.3 0.5 L34.0 2.4 L35.7 0.5 L37.4 2.4 L39.1 0.5 L40.8 2.4 L42.5 0.5 L44.2 2.4 L45.9 0.5 L47.6 2.4 L49.3 0.5 L51.0 2.4 L52.7 0.5 L54.4 2.4 L56.1 0.5 L57.8 2.4 L59.5 0.5 L61.2 2.4 L62.9 0.5 L64.6 2.4 L66.3 0.5 L68.0 2.4 L69.7 0.5 L71.4 2.4 L73.1 0.5 L74.8 2.4 L76.5 0.5 L78.2 2.4 L79.9 0.5 L81.6 2.4 L83.3 0.5 L85.0 2.4 L86.7 0.5 L88.4 2.4 L90.1 0.5 L91.8 2.4 L93.5 0.5 L95.2 2.4 L96.9 0.5 L98.6 2.4 L100.3 0.5 L102.0 2.4 L103.7 0.5 L105.4 2.4 L107.1 0.5 L108.8 2.4 L110.5 0.5 L112.2 2.4" fill="none" stroke="#7FA07F" stroke-width="1.15"/></svg>
<div class="a m" style="left:796.34px;top:619.13px;font-size:18.78px;color:#BCBEC4;">)</div>
<div class="a m" style="left:751.26px;top:648.61px;font-size:18.78px;color:#BCBEC4;">),</div>
<div class="a m" style="left:751.26px;top:678.10px;font-size:18.78px;color:#BCBEC4;">Intent().setComponent(</div>
<div class="a m" style="left:796.34px;top:707.58px;font-size:18.78px;color:#BCBEC4;">ComponentName(</div>
<div class="a" style="left:844.42px;top:733.05px;width:48.80px;height:23.90px;background:#2D2F33;border-radius:5px;"></div>
<div class="a s" style="left:852.22px;top:736.59px;font-size:17.8px;color:#8E9197;transform:scaleY(0.9);transform-origin:0 15.07px;">pkg:</div>
<div class="a m" style="left:895.12px;top:737.07px;font-size:18.78px;color:#6AAB73;">"com.letv.android.letvsafe"</div>
<div class="a m" style="left:1199.41px;top:737.07px;font-size:18.78px;color:#BCBEC4;">,</div>
<svg class="a" style="left:951.47px;top:754.05px;" width="44.20" height="2.90" viewBox="0 0 44.2 2.9" preserveAspectRatio="none"><path d="M0 2.4 L1.7 0.5 L3.4 2.4 L5.1 0.5 L6.8 2.4 L8.5 0.5 L10.2 2.4 L11.9 0.5 L13.6 2.4 L15.3 0.5 L17.0 2.4 L18.7 0.5 L20.4 2.4 L22.1 0.5 L23.8 2.4 L25.5 0.5 L27.2 2.4 L28.9 0.5 L30.6 2.4 L32.3 0.5 L34.0 2.4 L35.7 0.5 L37.4 2.4 L39.1 0.5 L40.8 2.4 L42.5 0.5 L44.2 2.4" fill="none" stroke="#7FA07F" stroke-width="1.15"/></svg>
<svg class="a" style="left:1097.98px;top:754.05px;" width="88.40" height="2.90" viewBox="0 0 88.4 2.9" preserveAspectRatio="none"><path d="M0 2.4 L1.7 0.5 L3.4 2.4 L5.1 0.5 L6.8 2.4 L8.5 0.5 L10.2 2.4 L11.9 0.5 L13.6 2.4 L15.3 0.5 L17.0 2.4 L18.7 0.5 L20.4 2.4 L22.1 0.5 L23.8 2.4 L25.5 0.5 L27.2 2.4 L28.9 0.5 L30.6 2.4 L32.3 0.5 L34.0 2.4 L35.7 0.5 L37.4 2.4 L39.1 0.5 L40.8 2.4 L42.5 0.5 L44.2 2.4 L45.9 0.5 L47.6 2.4 L49.3 0.5 L51.0 2.4 L52.7 0.5 L54.4 2.4 L56.1 0.5 L57.8 2.4 L59.5 0.5 L61.2 2.4 L62.9 0.5 L64.6 2.4 L66.3 0.5 L68.0 2.4 L69.7 0.5 L71.4 2.4 L73.1 0.5 L74.8 2.4 L76.5 0.5 L78.2 2.4 L79.9 0.5 L81.6 2.4 L83.3 0.5 L85.0 2.4 L86.7 0.5 L88.4 2.4" fill="none" stroke="#7FA07F" stroke-width="1.15"/></svg>
<div class="a" style="left:844.42px;top:762.54px;width:40.60px;height:23.90px;background:#2D2F33;border-radius:5px;"></div>
<div class="a s" style="left:852.22px;top:766.07px;font-size:17.8px;color:#8E9197;transform:scaleY(0.9);transform-origin:0 15.07px;">cls:</div>
<div class="a m" style="left:887.22px;top:766.55px;font-size:18.78px;color:#6AAB73;">"com.letv.android.letvsafe.AutobootManageActivity"</div>
<div class="a" style="left:704.88px;top:287.38px;width:1.10px;height:678.17px;background:#2F3135;"></div>
<div class="a" style="left:749.96px;top:316.87px;width:1.10px;height:117.95px;background:#2F3135;"></div>
<div class="a" style="left:795.04px;top:346.35px;width:1.10px;height:58.98px;background:#2F3135;"></div>
<div class="a" style="left:749.96px;top:523.26px;width:1.10px;height:117.96px;background:#2F3135;"></div>
<div class="a" style="left:795.04px;top:552.75px;width:1.10px;height:58.99px;background:#2F3135;"></div>
<div class="a" style="left:749.96px;top:700.17px;width:1.10px;height:265.38px;background:#2F3135;"></div>
<div class="a" style="left:795.04px;top:729.65px;width:1.10px;height:235.89px;background:#2F3135;"></div>
<svg class="a" style="left:1438.99px;top:60.60px;" width="17.00" height="16.10" viewBox="0 0 17 20" preserveAspectRatio="none"><ellipse cx="8.5" cy="10" rx="8.3" ry="9.8" fill="#C4504C"/><rect x="7.3" y="3.5" width="2.4" height="9" fill="#1E1F22"/><rect x="7.3" y="14.5" width="2.4" height="2.5" fill="#1E1F22"/></svg>
<div class="a s" style="left:1459.20px;top:59.29px;font-size:18.5px;color:#9A9DA2;">1</div>
<svg class="a" style="left:1479.20px;top:60.95px;" width="17.50" height="14.80" viewBox="0 0 18 19" preserveAspectRatio="none"><path d="M9 1 L17.5 18 L0.5 18 Z" fill="#B7803F" stroke="#B7803F" stroke-width="1.2" stroke-linejoin="round"/><rect x="8" y="6" width="2" height="7" fill="#1E1F22"/><rect x="8" y="14.3" width="2" height="2" fill="#1E1F22"/></svg>
<div class="a s" style="left:1500.60px;top:59.67px;font-size:18.5px;color:#9A9DA2;">18</div>
<svg class="a" style="left:1531.69px;top:61.43px;" width="17.50" height="14.80" viewBox="0 0 18 19" preserveAspectRatio="none"><path d="M9 1 L17.5 18 L0.5 18 Z" fill="#8E6F45" stroke="#8E6F45" stroke-width="1.2" stroke-linejoin="round"/><rect x="8" y="6" width="2" height="7" fill="#1E1F22"/><rect x="8" y="14.3" width="2" height="2" fill="#1E1F22"/></svg>
<div class="a s" style="left:1552.49px;top:60.15px;font-size:18.5px;color:#9A9DA2;">27</div>
<svg class="a" style="left:1585.57px;top:61.40px;" width="16.00" height="16.50" viewBox="0 0 16 21" preserveAspectRatio="none"><path d="M1.5 9 L6 14 L14.5 1.5" fill="none" stroke="#4E9A5A" stroke-width="2"/><path d="M1 19 L4 16.5 L7 19 L10 16.5 L13 19 L15 17" fill="none" stroke="#4E9A5A" stroke-width="1.3"/></svg>
<div class="a s" style="left:1605.99px;top:60.64px;font-size:18.5px;color:#9A9DA2;">71</div>
<svg class="a" style="left:1639.23px;top:66.04px;" width="12.00" height="6.10" viewBox="0 0 12 7" preserveAspectRatio="none"><path d="M1 6 L6 1 L11 6" fill="none" stroke="#C9CBD0" stroke-width="1.6"/></svg>
<svg class="a" style="left:1668.84px;top:65.53px;" width="12.00" height="6.10" viewBox="0 0 12 7" preserveAspectRatio="none"><path d="M1 1 L6 6 L11 1" fill="none" stroke="#C9CBD0" stroke-width="1.6"/></svg>
<div class="a" style="left:1662.92px;top:15.58px;width:3.20px;height:2.50px;background:#C9CBD0;border-radius:50%;"></div>
<div class="a" style="left:1662.85px;top:22.06px;width:3.20px;height:2.50px;background:#C9CBD0;border-radius:50%;"></div>
<div class="a" style="left:1662.78px;top:28.55px;width:3.20px;height:2.50px;background:#C9CBD0;border-radius:50%;"></div>
<div class="a" style="left:1679.04px;top:90.40px;width:11.50px;height:45.00px;background:#3E4044;"></div>
<div class="a" style="left:1672.40px;top:122.04px;width:18.50px;height:2.50px;background:#D9A343;"></div>
<div class="a" style="left:1672.40px;top:163.44px;width:18.50px;height:2.50px;background:#D9A343;"></div>
<div class="a" style="left:1672.40px;top:235.87px;width:18.50px;height:2.50px;background:#D9A343;"></div>
<div class="a" style="left:1672.40px;top:252.82px;width:18.50px;height:2.50px;background:#D9A343;"></div>
<div class="a" style="left:1672.40px;top:294.69px;width:18.50px;height:2.50px;background:#D9A343;"></div>
<div class="a" style="left:1672.40px;top:309.54px;width:18.50px;height:2.50px;background:#7DB346;"></div>
<div class="a" style="left:1672.40px;top:372.66px;width:18.50px;height:2.50px;background:#D9A343;"></div>
<div class="a" style="left:1672.40px;top:414.23px;width:18.50px;height:2.50px;background:#D9A343;"></div>
<div class="a" style="left:1672.40px;top:466.49px;width:18.50px;height:2.50px;background:#C75450;"></div>
<div class="a" style="left:1672.40px;top:530.24px;width:18.50px;height:2.50px;background:#7DB346;"></div>
<div class="a" style="left:1672.40px;top:562.51px;width:18.50px;height:2.50px;background:#D9A343;"></div>
<div class="a" style="left:1672.40px;top:578.84px;width:18.50px;height:2.50px;background:#D9A343;"></div>
<div class="a" style="left:1672.40px;top:582.43px;width:18.50px;height:2.50px;background:#D9A343;"></div>
<div class="a" style="left:1672.40px;top:666.18px;width:18.50px;height:2.50px;background:#D9A343;"></div>
<div class="a" style="left:1672.40px;top:686.10px;width:18.50px;height:2.50px;background:#7DB346;"></div>
</div><svg style="position:absolute;left:0;top:0" width="1700" height="970" viewBox="0 0 1700 970"><g fill="none" stroke="#76777A" stroke-opacity="0.86" stroke-width="6" stroke-linejoin="round"><path d="M751 922.3 L751 937.5 Q751 946.8 760.5 946.8 L784.5 946.8 Q793.9 946.8 793.9 937.5 L793.9 922.8"/><path d="M803.2 911 L803.2 937.5 Q803.2 946.8 812.5 946.8 L939 946.8 Q947.8 946.8 947.8 939 Q947.8 923.3 932 923.3 Q922.5 923.3 917.3 930.5"/><path d="M829 922.8 L829 944"/><path d="M847.2 922.8 L847.2 944"/><path d="M864.7 922.8 L864.7 944"/><ellipse cx="890.3" cy="936.2" rx="10.4" ry="10.9"/><path d="M879.7 927 L879.7 913.3 L903 913.3"/></g><g fill="#76777A" fill-opacity="0.86"><path d="M766.5 910.3 L772.1 915.9 L766.5 921.5 L760.9 915.9 Z"/><path d="M780.1 909.4 L785.7 915 L780.1 920.6 L774.5 915 Z"/><path d="M931.5 911.8 L936.7 917 L931.5 922.2 L926.3 917 Z"/></g></svg></body></html>
